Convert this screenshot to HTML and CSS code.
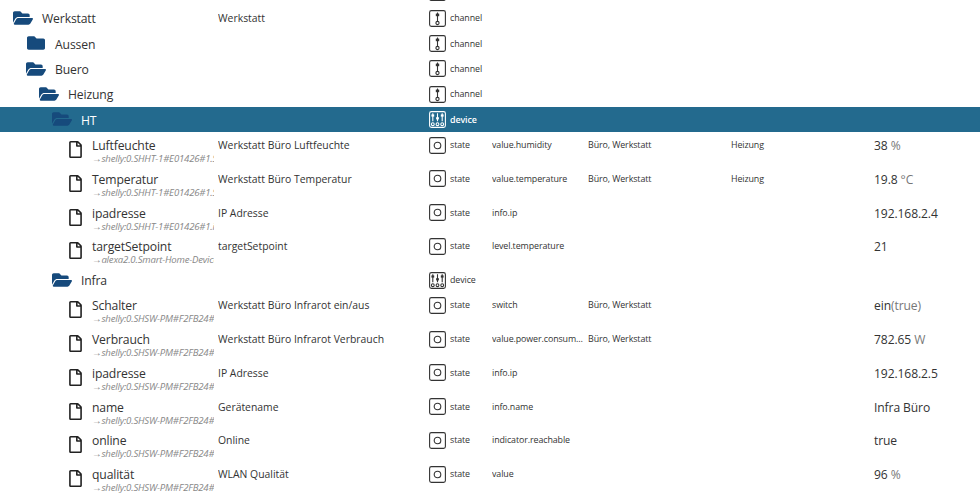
FILE: index.html
```html
<!DOCTYPE html>
<html lang="de">
<head>
<meta charset="utf-8">
<title>Objekte</title>
<link rel="stylesheet" href="styles.css">
</head>
<body>
<svg class="sprite" width="0" height="0" aria-hidden="true">
  <symbol id="folder-open" viewBox="0 0 576 512"><path d="M572.694 292.093L500.27 416.248A63.997 63.997 0 0 1 444.989 448H45.025c-18.523 0-30.064-20.093-20.731-36.093l72.424-124.155A64 64 0 0 1 152 256h399.964c18.523 0 30.064 20.093 20.73 36.093zM152 224h328v-48c0-26.51-21.49-48-48-48H272l-64-64H48C21.49 64 0 85.49 0 112v278.046l69.077-118.418C86.214 242.25 117.989 224 152 224z"/></symbol>
  <symbol id="folder" viewBox="0 0 512 512"><path d="M464 128H272l-64-64H48C21.49 64 0 85.49 0 112v288c0 26.51 21.49 48 48 48h416c26.51 0 48-21.49 48-48V176c0-26.51-21.49-48-48-48z"/></symbol>
  <symbol id="file" viewBox="0 0 384 512"><path d="M369.9 97.9L286 14C277 5 264.8-.1 252.1-.1H48C21.5 0 0 21.5 0 48v416c0 26.5 21.5 48 48 48h288c26.5 0 48-21.5 48-48V131.9c0-12.7-5.1-25-14.1-34zM332.1 128H256V51.9l76.1 76.1zM48 464V48h160v104c0 13.3 10.7 24 24 24h104v288H48z"/></symbol>
  <symbol id="t-state" viewBox="0 0 17 17"><rect x=".6" y=".6" width="15.8" height="15.8" rx="1.8" class="ln"/><circle cx="8.5" cy="8.5" r="3.3" class="ln"/></symbol>
  <symbol id="t-channel" viewBox="0 0 17 17"><rect x=".6" y=".6" width="15.8" height="15.8" rx="1.8" class="ln"/><path d="M8.5 2.5v9" class="ln"/><rect x="6.8" y="3.6" width="3.4" height="2.6" class="fl"/><circle cx="8.5" cy="13" r="1.6" class="ln"/></symbol>
  <symbol id="t-device" viewBox="0 0 17 17"><rect x=".6" y=".6" width="15.8" height="15.8" rx="1.8" class="ln"/><path d="M3.8 2.2v8M8.5 2.2v8M13.2 2.2v8" class="ln"/><rect x="2.4" y="3.4" width="2.8" height="2.2" class="fl"/><rect x="7.1" y="6.2" width="2.8" height="2.2" class="fl"/><rect x="11.8" y="3.4" width="2.8" height="2.2" class="fl"/><circle cx="3.8" cy="13.2" r="1.4" class="ln"/><circle cx="8.5" cy="13.2" r="1.4" class="ln"/><circle cx="13.2" cy="13.2" r="1.4" class="ln"/></symbol>
</svg>
<div class="tree">
  <div class="row group"><div class="name"></div><div class="alias"></div><div class="type"><svg class="ticon"><use href="#t-channel"/></svg></div></div>

  <div class="row group">
    <div class="name lvl0"><svg class="ficon open"><use href="#folder-open"/></svg><span class="title">Werkstatt</span></div>
    <div class="alias">Werkstatt</div>
    <div class="type"><svg class="ticon"><use href="#t-channel"/></svg><span>channel</span></div>
  </div>
  <div class="row group">
    <div class="name lvl1"><svg class="ficon"><use href="#folder"/></svg><span class="title">Aussen</span></div>
    <div class="alias"></div>
    <div class="type"><svg class="ticon"><use href="#t-channel"/></svg><span>channel</span></div>
  </div>
  <div class="row group">
    <div class="name lvl1"><svg class="ficon open"><use href="#folder-open"/></svg><span class="title">Buero</span></div>
    <div class="alias"></div>
    <div class="type"><svg class="ticon"><use href="#t-channel"/></svg><span>channel</span></div>
  </div>
  <div class="row group">
    <div class="name lvl2"><svg class="ficon open"><use href="#folder-open"/></svg><span class="title">Heizung</span></div>
    <div class="alias"></div>
    <div class="type"><svg class="ticon"><use href="#t-channel"/></svg><span>channel</span></div>
  </div>
  <div class="row group selected">
    <div class="name lvl3"><svg class="ficon open"><use href="#folder-open"/></svg><span class="title">HT</span></div>
    <div class="alias"></div>
    <div class="type"><svg class="ticon"><use href="#t-device"/></svg><span>device</span></div>
  </div>

  <div class="row leaf">
    <div class="name lvl4"><svg class="licon"><use href="#file"/></svg><div class="labels"><span class="title">Luftfeuchte</span><span class="link">→shelly:0.SHHT-1#E01426#1.Sensor.Humidity</span></div></div>
    <div class="alias">Werkstatt Büro Luftfeuchte</div>
    <div class="type"><svg class="ticon"><use href="#t-state"/></svg><span>state</span></div>
    <div class="role">value.humidity</div><div class="room">Büro, Werkstatt</div><div class="func">Heizung</div><div class="value">38 <em>%</em></div>
  </div>
  <div class="row leaf">
    <div class="name lvl4"><svg class="licon"><use href="#file"/></svg><div class="labels"><span class="title">Temperatur</span><span class="link">→shelly:0.SHHT-1#E01426#1.Sensor.Temperature</span></div></div>
    <div class="alias">Werkstatt Büro Temperatur</div>
    <div class="type"><svg class="ticon"><use href="#t-state"/></svg><span>state</span></div>
    <div class="role">value.temperature</div><div class="room">Büro, Werkstatt</div><div class="func">Heizung</div><div class="value">19.8 <em>°C</em></div>
  </div>
  <div class="row leaf">
    <div class="name lvl4"><svg class="licon"><use href="#file"/></svg><div class="labels"><span class="title">ipadresse</span><span class="link">→shelly:0.SHHT-1#E01426#1.ip</span></div></div>
    <div class="alias">IP Adresse</div>
    <div class="type"><svg class="ticon"><use href="#t-state"/></svg><span>state</span></div>
    <div class="role">info.ip</div><div class="room"></div><div class="func"></div><div class="value">192.168.2.4</div>
  </div>
  <div class="row leaf">
    <div class="name lvl4"><svg class="licon"><use href="#file"/></svg><div class="labels"><span class="title">targetSetpoint</span><span class="link">→alexa2.0.Smart-Home-Devices</span></div></div>
    <div class="alias">targetSetpoint</div>
    <div class="type"><svg class="ticon"><use href="#t-state"/></svg><span>state</span></div>
    <div class="role">level.temperature</div><div class="room"></div><div class="func"></div><div class="value">21</div>
  </div>

  <div class="row group">
    <div class="name lvl3"><svg class="ficon open"><use href="#folder-open"/></svg><span class="title">Infra</span></div>
    <div class="alias"></div>
    <div class="type"><svg class="ticon"><use href="#t-device"/></svg><span>device</span></div>
  </div>

  <div class="row leaf">
    <div class="name lvl4"><svg class="licon"><use href="#file"/></svg><div class="labels"><span class="title">Schalter</span><span class="link">→shelly:0.SHSW-PM#F2FB24#1.Relay0.Switch</span></div></div>
    <div class="alias">Werkstatt Büro Infrarot ein/aus</div>
    <div class="type"><svg class="ticon"><use href="#t-state"/></svg><span>state</span></div>
    <div class="role">switch</div><div class="room">Büro, Werkstatt</div><div class="func"></div><div class="value">ein<em>(true)</em></div>
  </div>
  <div class="row leaf">
    <div class="name lvl4"><svg class="licon"><use href="#file"/></svg><div class="labels"><span class="title">Verbrauch</span><span class="link">→shelly:0.SHSW-PM#F2FB24#1.Relay0.Power</span></div></div>
    <div class="alias">Werkstatt Büro Infrarot Verbrauch</div>
    <div class="type"><svg class="ticon"><use href="#t-state"/></svg><span>state</span></div>
    <div class="role">value.power.consumption</div><div class="room">Büro, Werkstatt</div><div class="func"></div><div class="value">782.65 <em>W</em></div>
  </div>
  <div class="row leaf">
    <div class="name lvl4"><svg class="licon"><use href="#file"/></svg><div class="labels"><span class="title">ipadresse</span><span class="link">→shelly:0.SHSW-PM#F2FB24#1.ip</span></div></div>
    <div class="alias">IP Adresse</div>
    <div class="type"><svg class="ticon"><use href="#t-state"/></svg><span>state</span></div>
    <div class="role">info.ip</div><div class="room"></div><div class="func"></div><div class="value">192.168.2.5</div>
  </div>
  <div class="row leaf">
    <div class="name lvl4"><svg class="licon"><use href="#file"/></svg><div class="labels"><span class="title">name</span><span class="link">→shelly:0.SHSW-PM#F2FB24#1.name</span></div></div>
    <div class="alias">Gerätename</div>
    <div class="type"><svg class="ticon"><use href="#t-state"/></svg><span>state</span></div>
    <div class="role">info.name</div><div class="room"></div><div class="func"></div><div class="value">Infra Büro</div>
  </div>
  <div class="row leaf">
    <div class="name lvl4"><svg class="licon"><use href="#file"/></svg><div class="labels"><span class="title">online</span><span class="link">→shelly:0.SHSW-PM#F2FB24#1.online</span></div></div>
    <div class="alias">Online</div>
    <div class="type"><svg class="ticon"><use href="#t-state"/></svg><span>state</span></div>
    <div class="role">indicator.reachable</div><div class="room"></div><div class="func"></div><div class="value">true</div>
  </div>
  <div class="row leaf">
    <div class="name lvl4"><svg class="licon"><use href="#file"/></svg><div class="labels"><span class="title">qualität</span><span class="link">→shelly:0.SHSW-PM#F2FB24#1.rssi</span></div></div>
    <div class="alias">WLAN Qualität</div>
    <div class="type"><svg class="ticon"><use href="#t-state"/></svg><span>state</span></div>
    <div class="role">value</div><div class="room"></div><div class="func"></div><div class="value">96 <em>%</em></div>
  </div>
</div>
</body>
</html>
```

FILE: styles.css
```css
* { box-sizing: border-box; }
html, body { margin: 0; height: 100%; overflow: hidden; background: #fff; }
body { font-family: "Open Sans", "Noto Sans", sans-serif; color: #333; }
.sprite { position: absolute; }
.tree { margin-top: -20.05px; }

.row {
  display: grid;
  grid-template-columns: 218px 211px 63px 96px 143px 143px 1fr;
  font-size: 9.8px;
  line-height: 26.2px;
  letter-spacing: -.1px;
}
.group { height: 25.35px; }
.leaf { height: 33.75px; }
.selected { background: #236a8e; color: #fff; }

.name { display: flex; align-items: flex-start; min-width: 0; width: 214px; overflow: hidden; }
.lvl0 { padding-left: 13px; }
.lvl1 { padding-left: 26px; }
.lvl2 { padding-left: 39px; }
.lvl3 { padding-left: 52px; }
.lvl4 { padding-left: 69px; }

.ficon { flex: none; width: 20px; height: 18px; margin: 3.7px 9px 0 0; fill: #164a7c; }
.licon { flex: none; width: 13px; height: 17px; margin: 9px 10px 0 0; fill: #222; }

.title { font-size: 12.2px; line-height: 27px; letter-spacing: -.15px; white-space: nowrap; }
.labels { display: flex; flex-direction: column; min-width: 0; }
.link {
  margin-top: -6px;
  font-size: 9.6px;
  line-height: 12px;
  font-style: italic;
  color: #888;
  letter-spacing: -.2px;
  white-space: nowrap;
}

.alias, .role, .room, .func { white-space: nowrap; overflow: hidden; }
.alias { font-size: 10.4px; letter-spacing: 0; }
.role, .room, .func { font-size: 8.9px; letter-spacing: -.1px; }
.role { text-overflow: ellipsis; }
.type { display: flex; align-items: flex-start; font-size: 8.9px; }
.ticon { flex: none; width: 17px; height: 17px; margin: 4.5px 4px 0 0; }
.ln { fill: none; stroke: currentColor; stroke-width: 1.1; }
.fl { fill: currentColor; }
.selected .type { font-weight: 600; }

.value { font-size: 12.1px; line-height: 27.4px; letter-spacing: -.1px; white-space: nowrap; }
.value em { font-style: normal; color: #777; }
```
